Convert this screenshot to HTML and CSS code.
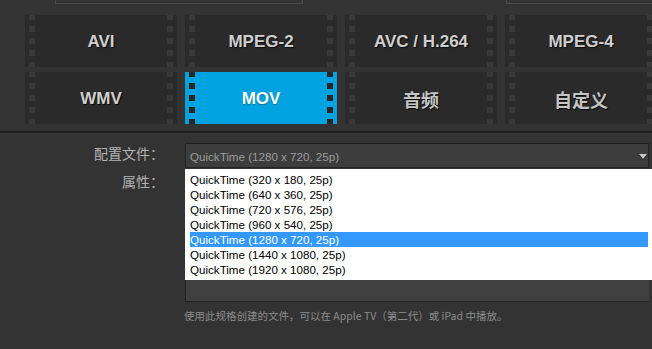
FILE: index.html
```html
<!DOCTYPE html>
<html lang="zh">
<head>
<meta charset="utf-8">
<title>导出设置</title>
<link rel="stylesheet" href="styles.css">
</head>
<body>
<div class="page">
  <div class="topbar">
    <div class="stub stub-a"></div>
    <div class="stub stub-b"></div>
  </div>

  <div class="formats">
    <div class="cell"><span class="strip strip-l"></span><span class="label">AVI</span><span class="strip strip-r"></span></div>
    <div class="cell"><span class="strip strip-l"></span><span class="label">MPEG-2</span><span class="strip strip-r"></span></div>
    <div class="cell"><span class="strip strip-l"></span><span class="label">AVC / H.264</span><span class="strip strip-r"></span></div>
    <div class="cell"><span class="strip strip-l"></span><span class="label">MPEG-4</span><span class="strip strip-r"></span></div>
    <div class="cell"><span class="strip strip-l"></span><span class="label">WMV</span><span class="strip strip-r"></span></div>
    <div class="cell active"><span class="strip strip-l"></span><span class="label">MOV</span><span class="strip strip-r"></span></div>
    <div class="cell"><span class="strip strip-l"></span><span class="label cjk">音频</span><span class="strip strip-r"></span></div>
    <div class="cell"><span class="strip strip-l"></span><span class="label cjk">自定义</span><span class="strip strip-r"></span></div>
  </div>

  <div class="sep"></div>

  <div class="form">
    <div class="field-label label-profile">配置文件：</div>
    <div class="select-wrap">
      <div class="select">
        <span class="select-text">QuickTime (1280 x 720, 25p)</span>
        <span class="arrow"></span>
      </div>
      <ul class="list">
        <li>QuickTime (320 x 180, 25p)</li>
        <li>QuickTime (640 x 360, 25p)</li>
        <li>QuickTime (720 x 576, 25p)</li>
        <li>QuickTime (960 x 540, 25p)</li>
        <li class="selected">QuickTime (1280 x 720, 25p)</li>
        <li>QuickTime (1440 x 1080, 25p)</li>
        <li>QuickTime (1920 x 1080, 25p)</li>
      </ul>
    </div>
    <div class="field-label label-attr">属性：</div>
    <div class="attr-box"></div>
    <div class="note">使用此规格创建的文件，可以在 Apple TV（第二代）或 iPad 中播放。</div>
  </div>
</div>
</body>
</html>
```

FILE: styles.css
```css
html, body {
  margin: 0;
  padding: 0;
}
body {
  background: #333333;
  width: 652px;
  height: 349px;
  overflow: hidden;
}
.page {
  width: 652px;
  height: 349px;
  overflow: hidden;
  background: #333333;
  font-family: "Noto Sans", "Noto Sans CJK SC", sans-serif;
}

/* cut-off controls at the very top */
.topbar {
  display: flex;
  height: 4px;
  padding-left: 55px;
}
.stub {
  height: 3px;
  border: 1px solid #4a4a4a;
  border-top: none;
  background: #353535;
}
.stub-a {
  width: 246px;
}
.stub-b {
  margin-left: 203px;
  flex: 1;
  border-right: none;
}

/* format buttons */
.formats {
  display: grid;
  grid-template-columns: repeat(4, 152px);
  grid-auto-rows: 52px;
  column-gap: 8px;
  row-gap: 5px;
  padding: 11px 0 0 25px;
  width: 700px;
}
.cell {
  display: flex;
  background: #2a2a2a;
}
.strip {
  width: 10px;
  flex: none;
  background-image: linear-gradient(to bottom, #393939 0, #393939 6px, transparent 6px, transparent 12px);
  background-size: 6px 12px;
  background-repeat: repeat-y;
}
.strip-l {
  background-position: 4px -1px;
}
.strip-r {
  background-position: 0 -1px;
}
.label {
  flex: 1;
  display: flex;
  align-items: center;
  justify-content: center;
  font-family: "Liberation Sans", Arial, sans-serif;
  font-weight: bold;
  font-size: 17px;
  color: #cfcfcf;
  text-shadow: 1px 1px 1px #0c0c0c;
  padding-top: 1px;
}
.label.cjk {
  font-family: "Noto Sans CJK SC", sans-serif;
  font-size: 18px;
  font-weight: bold;
  color: #c4c4c4;
}
.cell.active {
  background: #00a3e0;
}
.cell.active .strip {
  background-image: linear-gradient(to bottom, #262626 0, #262626 6px, transparent 6px, transparent 12px);
}
.cell.active .label {
  color: #ffffff;
  text-shadow: 0 1px 1px rgba(0, 0, 0, 0.35);
}

.sep {
  margin-top: 7px;
  height: 1px;
  border-top: 2px solid #1f1f1f;
  background: #3a3a3a;
}

/* form */
.form {
  display: grid;
  grid-template-columns: 185px 464px;
  padding-top: 9px;
  font-family: "Noto Sans CJK SC", sans-serif;
}
.field-label {
  text-align: right;
  padding-right: 21px;
  font-size: 14px;
  color: #b2b2b2;
  line-height: 15px;
}
.label-profile {
  padding-top: 3px;
}
.label-attr {
  padding-top: 6px;
}
.select-wrap {
  position: relative;
}
.select {
  height: 23px;
  border: 1px solid #242424;
  border-top-color: #1e1e1e;
  background: #3d3d3d;
  display: flex;
  align-items: center;
  justify-content: space-between;
  padding: 0 1px 0 4px;
}
.select-text {
  font-family: "Liberation Sans", Arial, sans-serif;
  font-size: 11.6px;
  color: #9c9c9c;
  padding-top: 2px;
}
.arrow {
  width: 0;
  height: 0;
  border-left: 4px solid transparent;
  border-right: 4px solid transparent;
  border-top: 5px solid #c8c8c8;
  filter: drop-shadow(0 1px 0 #1a1a1a);
  margin-top: 2px;
}
.list {
  position: absolute;
  top: 26px;
  left: 0;
  right: -3px;
  margin: 0;
  padding: 3px 4px 3px 5px;
  list-style: none;
  background: #ffffff;
  height: 105px;
  z-index: 2;
}
.list li {
  height: 15px;
  line-height: 15px;
  padding-left: 0;
  font-family: "Liberation Sans", Arial, sans-serif;
  font-size: 11.6px;
  color: #000000;
  white-space: nowrap;
}
.list li.selected {
  background: #3399ff;
  color: #ffffff;
}
.attr-box {
  margin-top: 3px;
  height: 130px;
  background: #404040;
  border-left: 1px solid #222222;
  border-bottom: 1px solid #222222;
}
.note {
  grid-column: 2;
  margin-top: 8px;
  margin-left: -1px;
  font-size: 10.5px;
  line-height: 12px;
  color: #8c8c8c;
  white-space: nowrap;
}
```
